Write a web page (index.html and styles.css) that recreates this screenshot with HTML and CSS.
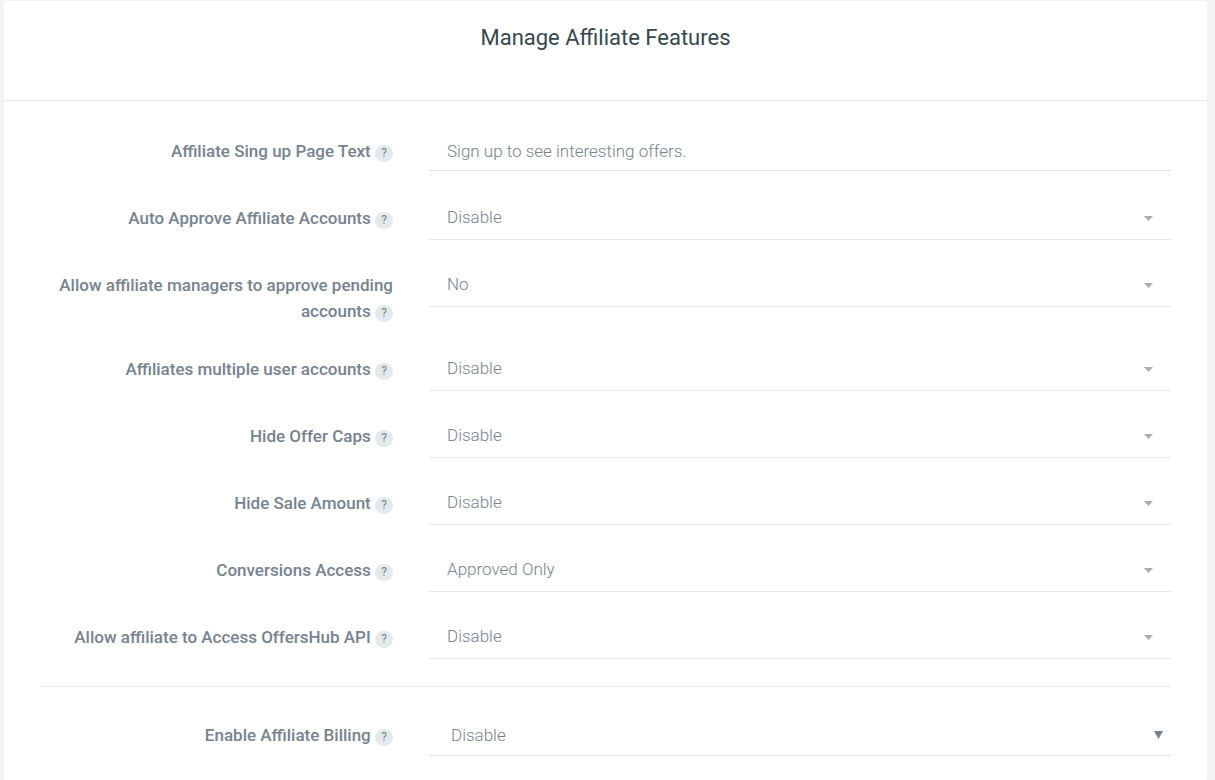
FILE: index.html
```
<!DOCTYPE html>
<html lang="en">
<head>
<meta charset="utf-8">
<meta name="viewport" content="width=device-width, initial-scale=1">
<title>Manage Affiliate Features</title>
<link rel="stylesheet" href="styles.css">
</head>
<body>
<main class="panel">
  <header class="panel-heading">
    <h1 class="panel-title">Manage Affiliate Features</h1>
  </header>
  <form class="panel-body">
    <div class="form-row">
      <div class="label-cell"><label for="signup-text">Affiliate Sing up Page Text</label> <span class="badge">?</span></div>
      <div class="control-cell"><input class="control control-line" id="signup-text" type="text" value="Sign up to see interesting offers."></div>
    </div>
    <div class="form-row">
      <div class="label-cell"><label for="auto-approve">Auto Approve Affiliate Accounts</label> <span class="badge">?</span></div>
      <div class="control-cell"><select class="control" id="auto-approve"><option>Disable</option><option>Enable</option></select><span class="caret"></span></div>
    </div>
    <div class="form-row">
      <div class="label-cell"><label for="managers-approve">Allow affiliate managers to approve pending accounts</label> <span class="badge">?</span></div>
      <div class="control-cell"><select class="control" id="managers-approve"><option>No</option><option>Yes</option></select><span class="caret"></span></div>
    </div>
    <div class="form-row">
      <div class="label-cell"><label for="multiple-users">Affiliates multiple user accounts</label> <span class="badge">?</span></div>
      <div class="control-cell"><select class="control" id="multiple-users"><option>Disable</option><option>Enable</option></select><span class="caret"></span></div>
    </div>
    <div class="form-row">
      <div class="label-cell"><label for="hide-caps">Hide Offer Caps</label> <span class="badge">?</span></div>
      <div class="control-cell"><select class="control" id="hide-caps"><option>Disable</option><option>Enable</option></select><span class="caret"></span></div>
    </div>
    <div class="form-row">
      <div class="label-cell"><label for="hide-sale">Hide Sale Amount</label> <span class="badge">?</span></div>
      <div class="control-cell"><select class="control" id="hide-sale"><option>Disable</option><option>Enable</option></select><span class="caret"></span></div>
    </div>
    <div class="form-row">
      <div class="label-cell"><label for="conversions">Conversions Access</label> <span class="badge">?</span></div>
      <div class="control-cell"><select class="control" id="conversions"><option>Approved Only</option><option>All</option></select><span class="caret"></span></div>
    </div>
    <div class="form-row">
      <div class="label-cell"><label for="api-access">Allow affiliate to Access OffersHub API</label> <span class="badge">?</span></div>
      <div class="control-cell"><select class="control" id="api-access"><option>Disable</option><option>Enable</option></select><span class="caret"></span></div>
    </div>
    <hr class="divider">
    <div class="form-row">
      <div class="label-cell"><label for="billing">Enable Affiliate Billing</label> <span class="badge">?</span></div>
      <div class="control-cell"><select class="control control-line control-native" id="billing"><option>Disable</option><option>Enable</option></select><span class="caret caret-native"></span></div>
    </div>
  </form>
</main>
</body>
</html>
```
FILE: styles.css
```
* {
  box-sizing: border-box;
}

body {
  margin: 0;
  padding: 1px 8px 0 4px;
  background: #f1f3f5;
  color: #76838f;
  font-family: Roboto, sans-serif;
  font-size: 17px;
  line-height: 26px;
}

.panel {
  min-height: 100vh;
  background: #fff;
  border-radius: 4px;
}

.panel-heading {
  padding: 23px 36px 48px;
  border-bottom: 1px solid #e4eaec;
}

.panel-title {
  margin: 0;
  color: #37474f;
  font-size: 22px;
  font-weight: 400;
  line-height: 28px;
  text-align: center;
}

.panel-body {
  padding: 30px 36px 0;
}

.form-row {
  display: grid;
  grid-template-columns: 1fr 2fr;
  align-items: start;
  min-height: 42px;
  margin: 0 -18px 25px;
}

.label-cell {
  padding: 7px 18px 0;
  font-weight: 500;
  text-align: right;
}

.badge {
  display: inline-block;
  width: 18px;
  height: 17px;
  border-radius: 9px;
  background: #e4eaec;
  font-size: 12px;
  font-weight: 400;
  line-height: 17px;
  text-align: center;
  vertical-align: baseline;
}

.control-cell {
  position: relative;
  margin: 0 18px;
}

.control {
  display: block;
  width: 100%;
  height: 42px;
  margin: 0;
  padding: 0 18px 4px;
  border: 0;
  border-bottom: 1px solid #e4eaec;
  border-radius: 0;
  outline: 0;
  background: transparent;
  color: #76838f;
  font: inherit;
  font-weight: 300;
  appearance: none;
}

.control-line {
  height: 40px;
  padding-bottom: 0;
  border-bottom-color: #e0e0e0;
}

.control-native {
  height: 41px;
  padding-left: 22px;
}

.caret {
  position: absolute;
  top: 18px;
  right: 18px;
  width: 9px;
  height: 5px;
  background: #a3afb7;
  clip-path: polygon(0 0, 100% 0, 50% 100%);
  pointer-events: none;
}

.caret-native {
  top: 16px;
  right: 8px;
  width: 9px;
  height: 8px;
  background: #76838f;
}

.divider {
  height: 1px;
  margin: 27px 0 28px;
  border: 0;
  background: #e4eaec;
}
```
